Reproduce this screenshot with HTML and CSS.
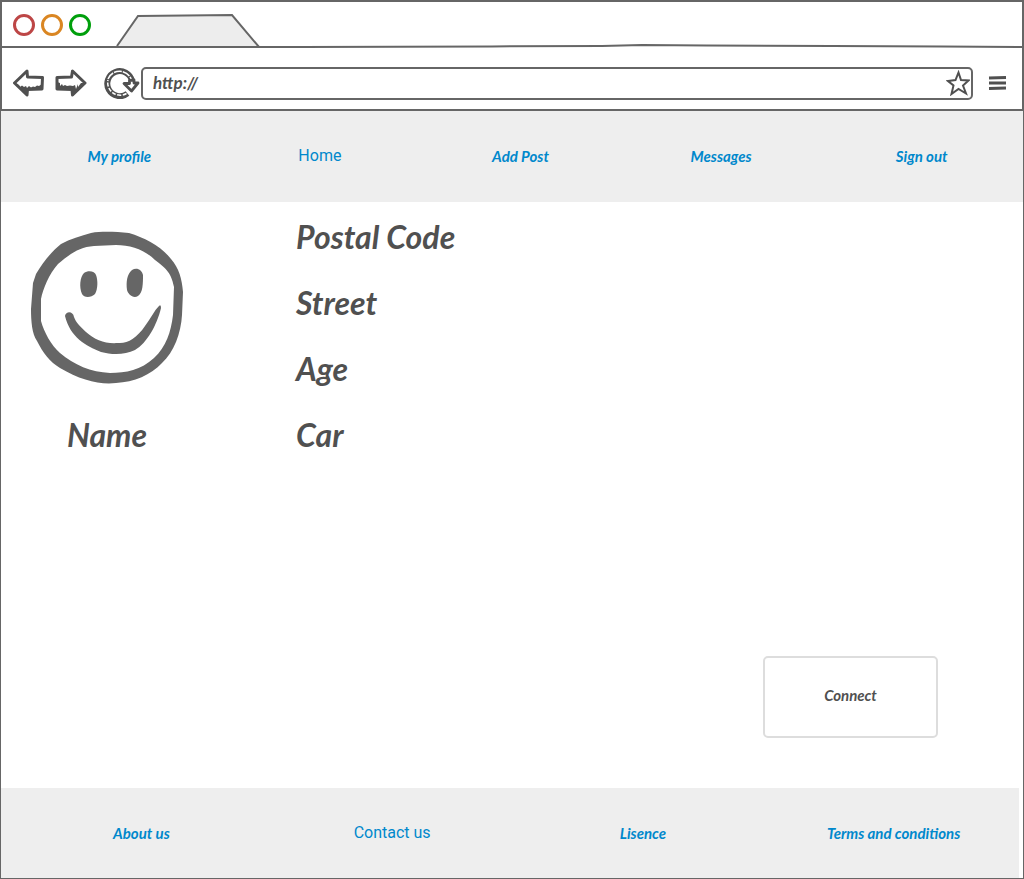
FILE: index.html
```
<!DOCTYPE html>
<html lang="en">
<head>
<meta charset="utf-8">
<meta name="viewport" content="width=device-width, initial-scale=1">
<title>My profile</title>
<link rel="stylesheet" href="styles.css">
</head>
<body>
<div class="browser">
  <header class="chrome">
    <div class="titlebar">
      <div class="lights">
        <span class="light light-close"></span>
        <span class="light light-minimize"></span>
        <span class="light light-expand"></span>
      </div>
      <svg class="tab" width="142" height="32" viewBox="0 0 142 32" aria-hidden="true">
        <path d="M0 34 L21 4 L115 3 L142 35" fill="#ededed" stroke="#666" stroke-width="2"/>
      </svg>
    </div>
    <svg class="rule" viewBox="0 0 1020 4" preserveAspectRatio="none" aria-hidden="true">
      <path d="M0 3 H300 L490 2.4 L600 2 L640 1 L705 1.4 L830 2 L940 2.5 L1020 3" fill="none" stroke="#666" stroke-width="2"/>
    </svg>
    <div class="toolbar">
      <button class="tool" type="button" aria-label="Back">
        <svg width="32" height="30" viewBox="0 0 32 30">
          <path d="M2.500 15 L15 3 L15.500 9 L30.500 9.500 L30 21 L15.500 21.500 L15 27 Z" fill="#fff" stroke="#505050" stroke-width="3" stroke-linejoin="round"/>
          <path d="M3 15 L7 17 L8 19 L10 17.500 L12 19 L14 18 L15 20 L17 18 L19 19.500 L21 18.500 L23 19 L25 17.500 L27 18 L30 16 V22 L16 22 L15 28 Z" fill="#505050"/>
        </svg>
      </button>
      <button class="tool" type="button" aria-label="Forward">
        <svg width="32" height="30" viewBox="0 0 32 30">
          <path d="M30 15 L17.500 3 L16.500 9 L2 9.500 L2 21 L17 21.500 L17.500 27 Z" fill="#fff" stroke="#505050" stroke-width="3" stroke-linejoin="round"/>
          <path d="M2 14 L5 15 L5 18 L7 16 L8 18 L10 17 L12 18 L15 17.500 L18 18 L20 17 L21 21 L23 16 L23 19 L26 15 H30 L17.500 28 L17 22 H2 Z" fill="#505050"/>
        </svg>
      </button>
      <button class="tool tool-reload" type="button" aria-label="Reload">
        <svg width="36" height="32" viewBox="0 0 36 32">
          <path d="M23.500 26.500 A12.500 12.500 0 1 1 28 14" fill="none" stroke="#505050" stroke-width="6"/>
          <path d="M22.500 26.500 A12.500 12.500 0 0 1 4 13" fill="none" stroke="#fff" stroke-width="1.500" stroke-dasharray="4 1.500"/>
          <path d="M4 12 A12.500 12.500 0 0 1 27.500 13" fill="none" stroke="#fff" stroke-width="1.500" stroke-dasharray="8 1"/>
          <path d="M20 16.500 L25.500 16.500 L25.500 13.500 L30 13 L30 16 L34 16 L27.500 24 Z" fill="#fff" stroke="#505050" stroke-width="2.800" stroke-linejoin="round"/>
        </svg>
      </button>
      <div class="address">
        <input class="url" type="text" value="http://" aria-label="Address">
        <button class="tool" type="button" aria-label="Bookmark">
          <svg width="24" height="26" viewBox="0 0 24 26">
            <path d="M12.500 2.500 L15 10 L22.500 10.500 L17 15.500 L20 23.500 L12.500 19 L5.500 24 L7.500 15.500 L2 11 L9.500 10 Z" fill="#fff" stroke="#505050" stroke-width="2"/>
          </svg>
        </button>
      </div>
      <button class="tool" type="button" aria-label="Menu">
        <svg width="20" height="16" viewBox="0 0 20 16">
          <path d="M1 3 L18 2.500 M1 8 L18 8 M1 13.500 L18 13" fill="none" stroke="#505050" stroke-width="2.800"/>
        </svg>
      </button>
    </div>
  </header>

  <nav class="links nav" aria-label="Main">
    <a class="link" href="#profile">My profile</a>
    <a class="link link-plain" href="#home">Home</a>
    <a class="link" href="#post">Add Post</a>
    <a class="link" href="#messages">Messages</a>
    <a class="link" href="#signout">Sign out</a>
  </nav>

  <main class="main">
    <div class="profile">
      <figure class="person">
        <svg class="face" width="154" height="154" viewBox="0 0 154 154" role="img" aria-label="Smiling face">
          <path fill="#666" fill-rule="evenodd" d="M61 2 C73 0 86 1 99 2 C115 7 131 15 141 28 C149 37 152 48 153 61 L152 84 C151 102 144 121 132 132 C121 144 104 151 86 152 C70 154 50 149 30 137 C20 131 13 122 7 110 C2 103 1 90 1 78 L3 52 L6 43 C13 31 23 19 31 13 C40 8 51 5 61 2 Z M64 15 C49 16 40 23 28 33 C19 43 13 58 11 68 L11 90 C14 101 21 114 30 122 C44 134 61 141 80 142 C96 142 111 139 124 127 C136 116 141 101 143 84 L144 56 C141 40 134 36 125 29 C115 19 101 14 86 14 Z"/>
          <path fill="#666" d="M54 42 C58 39 65 40 66 44 C68 49 68 58 65 63 C61 67 54 67 52 63 C49 56 50 46 54 42 Z M102 39 C107 36 112 39 113 44 C113 52 113 62 108 65 C103 68 98 63 97 59 C96 51 97 43 102 39 Z"/>
          <path fill="#666" d="M35 85 C36 80 43 80 44 86 C46 92 50 95 56 101 C65 109 75 113 88 112 C97 113 107 107 115 95 C121 87 124 80 129 75 Q131 73 131 77 C127 94 117 112 105 119 C95 124 82 124 71 121 C56 115 40 106 35 85 Z"/>
        </svg>
        <figcaption class="field">Name</figcaption>
      </figure>
      <ul class="details">
        <li class="field">Postal Code</li>
        <li class="field">Street</li>
        <li class="field">Age</li>
        <li class="field">Car</li>
      </ul>
    </div>
    <button class="connect" type="button">Connect</button>
  </main>

  <footer class="links footer">
    <a class="link" href="#about">About us</a>
    <a class="link link-plain" href="#contact">Contact us</a>
    <a class="link" href="#license">Lisence</a>
    <a class="link" href="#terms">Terms and conditions</a>
  </footer>
</div>
</body>
</html>
```
FILE: styles.css
```
* {
  box-sizing: border-box;
}

body {
  margin: 0;
  color: #505050;
  background: #fff;
  font-family: Lato, "Liberation Sans", sans-serif;
}

.browser {
  display: flex;
  flex-direction: column;
  min-height: 100vh;
  border: 1px solid #666;
  border-top: 0;
}

.chrome {
  border: solid #666;
  border-width: 2px 1px;
}

.titlebar {
  display: flex;
  align-items: flex-end;
  gap: 26px;
  height: 42px;
  padding-left: 11px;
}

.lights {
  display: flex;
  gap: 6px;
  padding-bottom: 8px;
}

.light {
  width: 22px;
  height: 22px;
  border: 3px solid;
  border-radius: 50%;
}

.light-close {
  border-color: #bd4646;
}

.light-minimize {
  border-color: #da8622;
}

.light-expand {
  border-color: #009f0c;
}

.tab,
.rule,
.tool svg {
  display: block;
}

.tab {
  overflow: visible;
}

.rule {
  width: 100%;
  height: 4px;
}

.toolbar {
  display: flex;
  align-items: center;
  height: 61px;
  padding: 9px 14px 0 10px;
  gap: 11px;
}

.tool {
  flex: none;
  padding: 0;
  border: 0;
  background: none;
}

.tool-reload {
  margin-left: 6px;
  margin-right: -10px;
}

.address {
  display: flex;
  flex: 1;
  align-items: center;
  min-width: 0;
  height: 33px;
  margin-right: 4px;
  padding: 0 1px 0 10px;
  border: 2px solid #666;
  border-radius: 5px;
}

.url {
  flex: 1;
  min-width: 0;
  padding: 0;
  border: 0;
  outline: 0;
  color: #505050;
  background: none;
  font: italic bold 17px/20px Lato, "Liberation Sans", sans-serif;
}

.links {
  display: grid;
  align-items: center;
  justify-items: center;
  background: #eee;
}

.nav {
  grid-template-columns: repeat(5, 1fr);
  height: 91px;
  padding: 0 1px 2px 18px;
}

.footer {
  grid-template-columns: repeat(4, 1fr);
  height: 90px;
  margin-right: 4px;
  padding-left: 15px;
}

.link {
  color: #0088cc;
  font-size: 15px;
  font-style: italic;
  font-weight: bold;
  line-height: 20px;
  text-decoration: none;
}

.link-plain {
  font-family: Roboto, sans-serif;
  font-size: 16px;
  font-style: normal;
  font-weight: normal;
}

.main {
  display: flex;
  flex: 1;
  flex-direction: column;
  align-items: flex-start;
  justify-content: space-between;
  padding: 17px 85px 50px 29px;
}

.profile {
  display: flex;
  gap: 112px;
}

.person {
  display: flex;
  flex-direction: column;
  align-items: center;
  justify-content: space-between;
  margin: 0;
  padding-top: 12px;
}

.details {
  display: flex;
  flex-direction: column;
  gap: 30px;
  margin: 0;
  padding: 0;
  list-style: none;
}

.field {
  font-size: 32px;
  font-style: italic;
  font-weight: bold;
  line-height: 36px;
}

.connect {
  align-self: flex-end;
  width: 175px;
  height: 82px;
  padding: 0 0 4px;
  border: 2px solid #ddd;
  border-radius: 5px;
  color: #505050;
  background: #fff;
  font: italic bold 15px/20px Lato, "Liberation Sans", sans-serif;
}
```
